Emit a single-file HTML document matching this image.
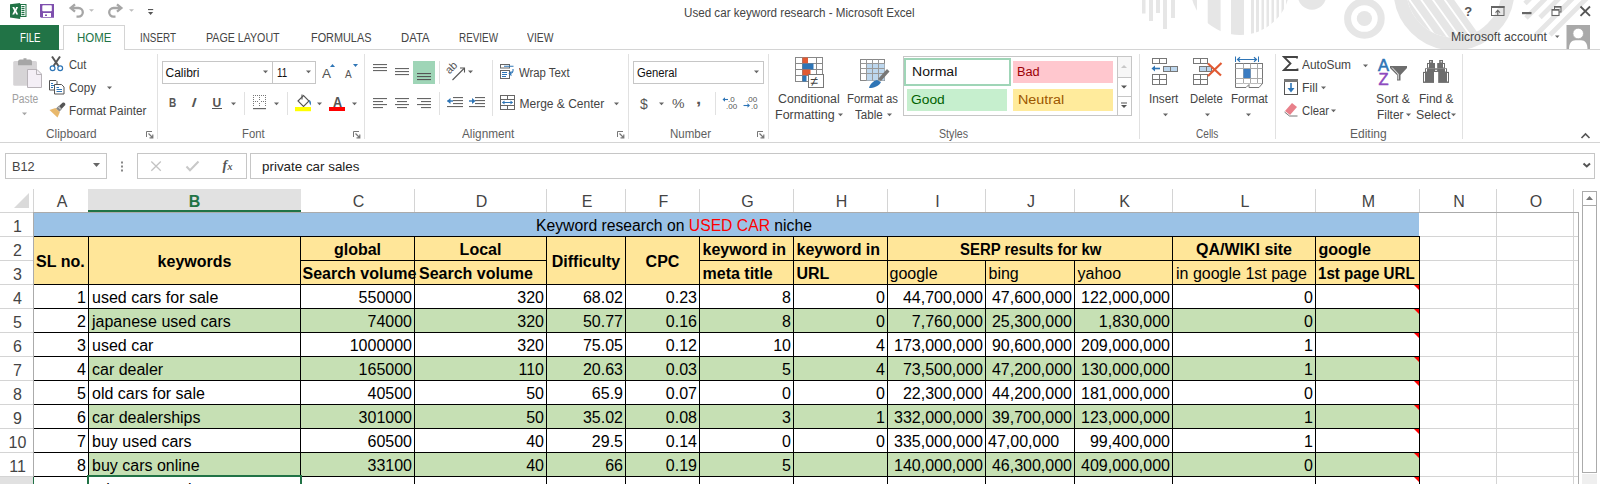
<!DOCTYPE html>
<html><head><meta charset="utf-8"><style>
html,body{margin:0;padding:0;width:1600px;height:484px;overflow:hidden;background:#fff;font-family:"Liberation Sans", sans-serif;}
.a{position:absolute;}
.t{white-space:pre;transform-origin:0 0;}
</style></head><body>
<svg class="a" style="left:0;top:0" width="1600" height="50" viewBox="0 0 1600 50"><rect x="1142" y="0" width="3.5" height="13.5" fill="#e6e6e6"/><rect x="1149" y="0" width="4" height="21" fill="#e6e6e6"/><rect x="1156" y="0" width="4" height="13" fill="#e6e6e6"/><rect x="1163" y="0" width="4" height="29" fill="#e6e6e6"/><rect x="1171" y="0" width="4" height="18" fill="#e6e6e6"/><clipPath id="cc"><circle cx="1240" cy="-15" r="50"/></clipPath><g clip-path="url(#cc)"><rect x="1190.5" y="-70" width="6.5" height="120" fill="#e6e6e6"/><rect x="1207.7" y="-70" width="12.899999999999864" height="120" fill="#e6e6e6"/><rect x="1231" y="-70" width="13" height="120" fill="#e6e6e6"/><rect x="1251" y="-70" width="3" height="120" fill="#e6e6e6"/><rect x="1256" y="-70" width="3" height="120" fill="#e6e6e6"/><rect x="1261.5" y="-70" width="2.5" height="120" fill="#e6e6e6"/><rect x="1266.5" y="-70" width="2.5" height="120" fill="#e6e6e6"/><rect x="1271.5" y="-70" width="2.5" height="120" fill="#e6e6e6"/><rect x="1276.5" y="-70" width="2.5" height="120" fill="#e6e6e6"/><rect x="1281.5" y="-70" width="2.5" height="120" fill="#e6e6e6"/><rect x="1286" y="-70" width="3" height="120" fill="#e6e6e6"/></g><circle cx="1312" cy="-4.5" r="14.2" fill="#e6e6e6"/><circle cx="1364.4" cy="18.5" r="16.8" fill="none" stroke="#e6e6e6" stroke-width="7"/><circle cx="1364.4" cy="18.5" r="7.6" fill="#e6e6e6"/><circle cx="1454" cy="-10" r="54" fill="none" stroke="#e6e6e6" stroke-width="13"/><clipPath id="c2"><circle cx="1454" cy="-10" r="47.5"/></clipPath><g clip-path="url(#c2)"><polygon points="91.1,-1908.4 1834.8,532.8 1590.7,707.1 -153.0,-1734.1" fill="#e6e6e6"/><line x1="61.5" y1="-1887.3" x2="1805.2" y2="553.9" stroke="#fff" stroke-width="1.8"/><line x1="69.3" y1="-1892.9" x2="1813.0" y2="548.3" stroke="#fff" stroke-width="1.8"/><line x1="77.1" y1="-1898.4" x2="1820.8" y2="542.8" stroke="#fff" stroke-width="1.8"/><line x1="84.9" y1="-1904.0" x2="1828.6" y2="537.2" stroke="#fff" stroke-width="1.8"/></g><polygon points="1523.3,1.8 1526.7,5.2 1676.7,-144.8 1673.3,-148.2" fill="#e6e6e6"/><polygon points="1524.3,16.3 1527.7,19.7 1677.7,-130.3 1674.3,-133.7" fill="#e6e6e6"/><polygon points="1538.3,15.8 1541.7,19.2 1691.7,-130.8 1688.3,-134.2" fill="#e6e6e6"/><polygon points="1533.3,34.3 1536.7,37.7 1686.7,-112.3 1683.3,-115.7" fill="#e6e6e6"/><polygon points="1548.3,33.3 1551.7,36.7 1701.7,-113.3 1698.3,-116.7" fill="#e6e6e6"/></svg><svg class="a" style="left:0px;top:0px" width="160" height="24" viewBox="0 0 160 24">
<polygon points="10,4.2 20.2,3 20.2,19 10,17.6" fill="#217346"/>
<rect x="20.5" y="4.5" width="5.5" height="12" fill="#fff" stroke="#217346" stroke-width="1"/>
<g fill="#217346"><rect x="21.5" y="6" width="3" height="1.2"/><rect x="21.5" y="8" width="3" height="1.2"/><rect x="21.5" y="10" width="3" height="1.2"/><rect x="21.5" y="12" width="3" height="1.2"/><rect x="21.5" y="14" width="3" height="1.2"/></g>
<path d="M12.3,7 L14.3,7 L15.2,9.2 L16.1,7 L18.1,7 L16.3,10.7 L18.2,14.6 L16.2,14.6 L15.2,12.3 L14.2,14.6 L12.2,14.6 L14.1,10.7 Z" fill="#fff"/>
<path d="M40,4 H54 V17.8 H41 L40,16.8 Z" fill="#7e4fae"/>
<rect x="42.3" y="5.2" width="9.5" height="6" rx="0.8" fill="#fff"/>
<rect x="43" y="13" width="8" height="4" fill="#fff"/>
<rect x="45" y="14.5" width="2" height="1.5" fill="#7e4fae"/>
<path d="M75,4.3 L70.6,8 L75,11.7" fill="none" stroke="#a6a6a6" stroke-width="2.3"/>
<path d="M71.5,8 H78.5 A4.3,4.3 0 0 1 78.5,16.6 H76.5" fill="none" stroke="#a6a6a6" stroke-width="2.3"/>
<polygon points="89,9.3 94,9.3 91.5,11.8" fill="#bdbdbd"/>
<path d="M117,4.3 L121.4,8 L117,11.7" fill="none" stroke="#a6a6a6" stroke-width="2.3"/>
<path d="M120.5,8 H113.5 A4.3,4.3 0 0 0 113.5,16.6 H115.5" fill="none" stroke="#a6a6a6" stroke-width="2.3"/>
<polygon points="129,9.3 134,9.3 131.5,11.8" fill="#bdbdbd"/>
<rect x="148" y="9" width="5.2" height="1.1" fill="#555"/>
<polygon points="148,12 153.2,12 150.6,15" fill="#555"/>
</svg><div class="a t" style="left:1464.30px;top:4px;font-size:13px;line-height:15px;color:#555;font-weight:bold;">?</div><svg class="a" style="left:1456px;top:0px" width="144" height="50" viewBox="0 0 144 50">
<rect x="35.5" y="6.5" width="12.5" height="9" fill="none" stroke="#666" stroke-width="1"/>
<rect x="35" y="6" width="13.5" height="2" fill="#666"/>
<path d="M41.75,15.5 V10.5 M39.5,12.6 L41.75,10.3 L44,12.6" fill="none" stroke="#666" stroke-width="1.1"/>
<rect x="66" y="12" width="9.5" height="2.2" fill="#666"/>
<rect x="98.5" y="6.5" width="6.5" height="5.5" fill="none" stroke="#666" stroke-width="1"/>
<rect x="96" y="9.5" width="7" height="6" fill="#fff" stroke="#666" stroke-width="1.1"/>
<rect x="96" y="9.2" width="7" height="1.5" fill="#666"/>
<rect x="98.5" y="6.2" width="6.5" height="1.5" fill="#666"/>
<path d="M124.5,6.5 L134,15.8 M134,6.5 L124.5,15.8" stroke="#555" stroke-width="1.8"/>
<polygon points="99,35.5 103.5,35.5 101.25,38" fill="#666"/>
<rect x="110.5" y="25" width="23.5" height="24.5" fill="#a9a9a9"/>
<path d="M113,49.5 C113,43 115.5,40.2 119.5,40.2 H125 C129,40.2 131.5,43 131.5,49.5 Z" fill="#fff"/>
<circle cx="122.2" cy="33.5" r="5.3" fill="#fff" stroke="#a9a9a9" stroke-width="0.8"/>
</svg><div class="a t" style="left:683.50px;top:6px;font-size:12px;line-height:14px;color:#444;transform:scaleX(0.9688);">Used car keyword research - Microsoft Excel</div><div class="a" style="left:0px;top:25px;width:59px;height:25px;background:#217346;"></div><div class="a t" style="left:19.50px;top:31px;font-size:12px;line-height:14px;color:#fff;transform:scaleX(0.8091);">FILE</div><div class="a" style="left:63px;top:25px;width:1px;height:25px;background:#d4d4d4;"></div><div class="a" style="left:124px;top:25px;width:1px;height:25px;background:#d4d4d4;"></div><div class="a" style="left:63px;top:25px;width:62px;height:1px;background:#d4d4d4;"></div><div class="a" style="left:59px;top:49px;width:5px;height:1px;background:#d4d4d4;"></div><div class="a" style="left:124px;top:49px;width:1476px;height:1px;background:#d4d4d4;"></div><div class="a" style="left:64px;top:26px;width:60px;height:24px;background:#fff;"></div><div class="a t" style="left:76.50px;top:31px;font-size:12px;line-height:14px;color:#217346;transform:scaleX(0.9584);">HOME</div><div class="a t" style="left:139.78px;top:31px;font-size:12px;line-height:14px;color:#444444;transform:scaleX(0.8215);">INSERT</div><div class="a t" style="left:206.30px;top:31px;font-size:12px;line-height:14px;color:#444444;transform:scaleX(0.8878);">PAGE LAYOUT</div><div class="a t" style="left:310.60px;top:31px;font-size:12px;line-height:14px;color:#444444;transform:scaleX(0.9060);">FORMULAS</div><div class="a t" style="left:400.50px;top:31px;font-size:12px;line-height:14px;color:#444444;transform:scaleX(0.9431);">DATA</div><div class="a t" style="left:458.50px;top:31px;font-size:12px;line-height:14px;color:#444444;transform:scaleX(0.8227);">REVIEW</div><div class="a t" style="left:527.00px;top:31px;font-size:12px;line-height:14px;color:#444444;transform:scaleX(0.8615);">VIEW</div><div class="a t" style="left:1450.50px;top:30px;font-size:12px;line-height:14px;color:#444444;transform:scaleX(1.0190);">Microsoft account</div><div class="a" style="left:0px;top:142px;width:1600px;height:1px;background:#d4d4d4;"></div><div class="a" style="left:5px;top:153px;width:102px;height:26px;background:#fff;border:1px solid #c6c6c6;box-sizing:border-box;"></div><div class="a t" style="left:11.52px;top:159px;font-size:13px;line-height:15px;color:#444444;transform:scaleX(0.9817);">B12</div><div class="a" style="left:137px;top:153px;width:110px;height:26px;background:#fff;border:1px solid #c6c6c6;box-sizing:border-box;"></div><div class="a" style="left:250px;top:153px;width:1345px;height:26px;background:#fff;border:1px solid #c6c6c6;box-sizing:border-box;"></div><div class="a t" style="left:262.00px;top:159px;font-size:13px;line-height:15px;color:#222;transform:scaleX(1.0300);">private car sales</div><div class="a" style="left:88px;top:189px;width:213px;height:23px;background:#e1e1e1;"></div><div class="a" style="left:88px;top:210px;width:213px;height:2px;background:#217346;"></div><div class="a" style="left:0px;top:212px;width:33px;height:1px;background:#d4d4d4;"></div><div class="a" style="left:33px;top:212px;width:1546px;height:1px;background:#ababab;"></div><div class="a" style="left:33px;top:189px;width:1px;height:23px;background:#d4d4d4;"></div><div class="a" style="left:33px;top:212px;width:1px;height:273px;background:#ababab;"></div><div class="a" style="left:414px;top:189px;width:1px;height:23px;background:#d4d4d4;"></div><div class="a" style="left:546px;top:189px;width:1px;height:23px;background:#d4d4d4;"></div><div class="a" style="left:625px;top:189px;width:1px;height:23px;background:#d4d4d4;"></div><div class="a" style="left:699px;top:189px;width:1px;height:23px;background:#d4d4d4;"></div><div class="a" style="left:793px;top:189px;width:1px;height:23px;background:#d4d4d4;"></div><div class="a" style="left:887px;top:189px;width:1px;height:23px;background:#d4d4d4;"></div><div class="a" style="left:985px;top:189px;width:1px;height:23px;background:#d4d4d4;"></div><div class="a" style="left:1074px;top:189px;width:1px;height:23px;background:#d4d4d4;"></div><div class="a" style="left:1172px;top:189px;width:1px;height:23px;background:#d4d4d4;"></div><div class="a" style="left:1315px;top:189px;width:1px;height:23px;background:#d4d4d4;"></div><div class="a" style="left:1419px;top:189px;width:1px;height:23px;background:#d4d4d4;"></div><div class="a" style="left:1496px;top:189px;width:1px;height:23px;background:#d4d4d4;"></div><div class="a" style="left:1573px;top:189px;width:1px;height:23px;background:#d4d4d4;"></div><div class="a" style="left:1578px;top:212px;width:1px;height:273px;background:#ababab;"></div><div class="a t" style="left:56.66px;top:192.6px;font-size:16px;line-height:17px;color:#444444;">A</div><div class="a t" style="left:188.72px;top:192.6px;font-size:16px;line-height:17px;color:#217346;font-weight:bold;">B</div><div class="a t" style="left:352.72px;top:192.6px;font-size:16px;line-height:17px;color:#444444;">C</div><div class="a t" style="left:475.72px;top:192.6px;font-size:16px;line-height:17px;color:#444444;">D</div><div class="a t" style="left:581.66px;top:192.6px;font-size:16px;line-height:17px;color:#444444;">E</div><div class="a t" style="left:658.61px;top:192.6px;font-size:16px;line-height:17px;color:#444444;">F</div><div class="a t" style="left:741.28px;top:192.6px;font-size:16px;line-height:17px;color:#444444;">G</div><div class="a t" style="left:835.72px;top:192.6px;font-size:16px;line-height:17px;color:#444444;">H</div><div class="a t" style="left:935.28px;top:192.6px;font-size:16px;line-height:17px;color:#444444;">I</div><div class="a t" style="left:1027.00px;top:192.6px;font-size:16px;line-height:17px;color:#444444;">J</div><div class="a t" style="left:1119.16px;top:192.6px;font-size:16px;line-height:17px;color:#444444;">K</div><div class="a t" style="left:1240.55px;top:192.6px;font-size:16px;line-height:17px;color:#444444;">L</div><div class="a t" style="left:1361.84px;top:192.6px;font-size:16px;line-height:17px;color:#444444;">M</div><div class="a t" style="left:1453.22px;top:192.6px;font-size:16px;line-height:17px;color:#444444;">N</div><div class="a t" style="left:1529.78px;top:192.6px;font-size:16px;line-height:17px;color:#444444;">O</div><svg class="a" style="left:0px;top:189px" width="33" height="23" viewBox="0 0 33 23"><polygon points="29,4 29,19 14,19" fill="#dadada"/></svg><div class="a" style="left:0px;top:477px;width:33px;height:7px;background:#e1e1e1;"></div><div class="a" style="left:0px;top:236px;width:33px;height:1px;background:#d4d4d4;"></div><div class="a t" style="left:13.05px;top:217.6px;font-size:16px;line-height:17px;color:#444444;">1</div><div class="a" style="left:0px;top:260px;width:33px;height:1px;background:#d4d4d4;"></div><div class="a t" style="left:13.05px;top:241.6px;font-size:16px;line-height:17px;color:#444444;">2</div><div class="a" style="left:0px;top:284px;width:33px;height:1px;background:#d4d4d4;"></div><div class="a t" style="left:13.05px;top:265.6px;font-size:16px;line-height:17px;color:#444444;">3</div><div class="a" style="left:0px;top:308px;width:33px;height:1px;background:#d4d4d4;"></div><div class="a t" style="left:13.05px;top:289.6px;font-size:16px;line-height:17px;color:#444444;">4</div><div class="a" style="left:0px;top:332px;width:33px;height:1px;background:#d4d4d4;"></div><div class="a t" style="left:13.05px;top:313.6px;font-size:16px;line-height:17px;color:#444444;">5</div><div class="a" style="left:0px;top:356px;width:33px;height:1px;background:#d4d4d4;"></div><div class="a t" style="left:13.05px;top:337.6px;font-size:16px;line-height:17px;color:#444444;">6</div><div class="a" style="left:0px;top:380px;width:33px;height:1px;background:#d4d4d4;"></div><div class="a t" style="left:13.05px;top:361.6px;font-size:16px;line-height:17px;color:#444444;">7</div><div class="a" style="left:0px;top:404px;width:33px;height:1px;background:#d4d4d4;"></div><div class="a t" style="left:13.05px;top:385.6px;font-size:16px;line-height:17px;color:#444444;">8</div><div class="a" style="left:0px;top:428px;width:33px;height:1px;background:#d4d4d4;"></div><div class="a t" style="left:13.05px;top:409.6px;font-size:16px;line-height:17px;color:#444444;">9</div><div class="a" style="left:0px;top:452px;width:33px;height:1px;background:#d4d4d4;"></div><div class="a t" style="left:8.60px;top:433.6px;font-size:16px;line-height:17px;color:#444444;">10</div><div class="a" style="left:0px;top:476px;width:33px;height:1px;background:#d4d4d4;"></div><div class="a t" style="left:9.20px;top:457.6px;font-size:16px;line-height:17px;color:#444444;">11</div><div class="a" style="left:0px;top:500px;width:33px;height:1px;background:#d4d4d4;"></div><div class="a t" style="left:8.60px;top:481.6px;font-size:16px;line-height:17px;color:#444444;">12</div><div class="a" style="left:33px;top:477px;width:1px;height:8px;background:#217346;"></div><div class="a" style="left:34px;top:213px;width:1385px;height:23px;background:#9bc2e6;"></div><div class="a" style="left:34px;top:237px;width:1385px;height:47px;background:#ffe699;"></div><div class="a" style="left:89px;top:309px;width:1330px;height:23px;background:#c6e0b4;"></div><div class="a" style="left:89px;top:357px;width:1330px;height:23px;background:#c6e0b4;"></div><div class="a" style="left:89px;top:405px;width:1330px;height:23px;background:#c6e0b4;"></div><div class="a" style="left:89px;top:453px;width:1330px;height:23px;background:#c6e0b4;"></div><div class="a" style="left:1420px;top:236px;width:158px;height:1px;background:#d4d4d4;"></div><div class="a" style="left:1420px;top:260px;width:158px;height:1px;background:#d4d4d4;"></div><div class="a" style="left:1420px;top:284px;width:158px;height:1px;background:#d4d4d4;"></div><div class="a" style="left:1420px;top:308px;width:158px;height:1px;background:#d4d4d4;"></div><div class="a" style="left:1420px;top:332px;width:158px;height:1px;background:#d4d4d4;"></div><div class="a" style="left:1420px;top:356px;width:158px;height:1px;background:#d4d4d4;"></div><div class="a" style="left:1420px;top:380px;width:158px;height:1px;background:#d4d4d4;"></div><div class="a" style="left:1420px;top:404px;width:158px;height:1px;background:#d4d4d4;"></div><div class="a" style="left:1420px;top:428px;width:158px;height:1px;background:#d4d4d4;"></div><div class="a" style="left:1420px;top:452px;width:158px;height:1px;background:#d4d4d4;"></div><div class="a" style="left:1420px;top:476px;width:158px;height:1px;background:#d4d4d4;"></div><div class="a" style="left:1420px;top:500px;width:158px;height:1px;background:#d4d4d4;"></div><div class="a" style="left:1496px;top:213px;width:1px;height:272px;background:#d4d4d4;"></div><div class="a" style="left:1573px;top:213px;width:1px;height:272px;background:#d4d4d4;"></div><div class="a" style="left:88px;top:236px;width:1px;height:249px;background:#000;"></div><div class="a" style="left:300px;top:236px;width:1px;height:249px;background:#000;"></div><div class="a" style="left:414px;top:236px;width:1px;height:249px;background:#000;"></div><div class="a" style="left:546px;top:236px;width:1px;height:249px;background:#000;"></div><div class="a" style="left:625px;top:236px;width:1px;height:249px;background:#000;"></div><div class="a" style="left:699px;top:236px;width:1px;height:249px;background:#000;"></div><div class="a" style="left:793px;top:236px;width:1px;height:249px;background:#000;"></div><div class="a" style="left:887px;top:236px;width:1px;height:249px;background:#000;"></div><div class="a" style="left:985px;top:236px;width:1px;height:249px;background:#000;"></div><div class="a" style="left:1074px;top:236px;width:1px;height:249px;background:#000;"></div><div class="a" style="left:1172px;top:236px;width:1px;height:249px;background:#000;"></div><div class="a" style="left:1315px;top:236px;width:1px;height:249px;background:#000;"></div><div class="a" style="left:1419px;top:236px;width:1px;height:249px;background:#000;"></div><div class="a" style="left:34px;top:236px;width:1386px;height:1px;background:#000;"></div><div class="a" style="left:34px;top:284px;width:1386px;height:1px;background:#000;"></div><div class="a" style="left:34px;top:308px;width:1386px;height:1px;background:#000;"></div><div class="a" style="left:34px;top:332px;width:1386px;height:1px;background:#000;"></div><div class="a" style="left:34px;top:356px;width:1386px;height:1px;background:#000;"></div><div class="a" style="left:34px;top:380px;width:1386px;height:1px;background:#000;"></div><div class="a" style="left:34px;top:404px;width:1386px;height:1px;background:#000;"></div><div class="a" style="left:34px;top:428px;width:1386px;height:1px;background:#000;"></div><div class="a" style="left:34px;top:452px;width:1386px;height:1px;background:#000;"></div><div class="a" style="left:34px;top:476px;width:1386px;height:1px;background:#000;"></div><div class="a" style="left:34px;top:500px;width:1386px;height:1px;background:#000;"></div><div class="a" style="left:300px;top:260px;width:115px;height:1px;background:#000;"></div><div class="a" style="left:414px;top:260px;width:133px;height:1px;background:#000;"></div><div class="a" style="left:699px;top:260px;width:95px;height:1px;background:#000;"></div><div class="a" style="left:793px;top:260px;width:95px;height:1px;background:#000;"></div><div class="a" style="left:887px;top:260px;width:286px;height:1px;background:#000;"></div><div class="a" style="left:1172px;top:260px;width:144px;height:1px;background:#000;"></div><div class="a" style="left:1315px;top:260px;width:105px;height:1px;background:#000;"></div><div class="a" style="left:985px;top:237px;width:1px;height:23px;background:#ffe699;"></div><div class="a" style="left:1074px;top:237px;width:1px;height:23px;background:#ffe699;"></div><svg class="a" style="left:1414px;top:285px" width="5" height="5" viewBox="0 0 5 5"><polygon points="0,0 5,0 5,5" fill="#f00"/></svg><svg class="a" style="left:1414px;top:309px" width="5" height="5" viewBox="0 0 5 5"><polygon points="0,0 5,0 5,5" fill="#f00"/></svg><svg class="a" style="left:1414px;top:333px" width="5" height="5" viewBox="0 0 5 5"><polygon points="0,0 5,0 5,5" fill="#f00"/></svg><svg class="a" style="left:1414px;top:357px" width="5" height="5" viewBox="0 0 5 5"><polygon points="0,0 5,0 5,5" fill="#f00"/></svg><svg class="a" style="left:1414px;top:381px" width="5" height="5" viewBox="0 0 5 5"><polygon points="0,0 5,0 5,5" fill="#f00"/></svg><svg class="a" style="left:1414px;top:405px" width="5" height="5" viewBox="0 0 5 5"><polygon points="0,0 5,0 5,5" fill="#f00"/></svg><svg class="a" style="left:1414px;top:429px" width="5" height="5" viewBox="0 0 5 5"><polygon points="0,0 5,0 5,5" fill="#f00"/></svg><svg class="a" style="left:1414px;top:453px" width="5" height="5" viewBox="0 0 5 5"><polygon points="0,0 5,0 5,5" fill="#f00"/></svg><svg class="a" style="left:1414px;top:477px" width="5" height="5" viewBox="0 0 5 5"><polygon points="0,0 5,0 5,5" fill="#f00"/></svg><div class="a t" style="left:536.02px;top:217px;font-size:16px;line-height:17px;color:#000;transform:scaleX(0.9818);">Keyword research on <span style="color:#f00">USED CAR</span> niche</div><div class="a t" style="left:959.50px;top:241px;font-size:16px;line-height:17px;color:#000;font-weight:bold;transform:scaleX(0.9318);">SERP results for kw</div><div class="a t" style="left:36.06px;top:253px;font-size:16px;line-height:17px;color:#000;font-weight:bold;">SL no.</div><div class="a t" style="left:157.59px;top:253px;font-size:16px;line-height:17px;color:#000;font-weight:bold;">keywords</div><div class="a t" style="left:333.95px;top:241px;font-size:16px;line-height:17px;color:#000;font-weight:bold;">global</div><div class="a t" style="left:302.50px;top:265px;font-size:16px;line-height:17px;color:#000;font-weight:bold;">Search volume</div><div class="a t" style="left:459.61px;top:241px;font-size:16px;line-height:17px;color:#000;font-weight:bold;">Local</div><div class="a t" style="left:419.00px;top:265px;font-size:16px;line-height:17px;color:#000;font-weight:bold;">Search volume</div><div class="a t" style="left:551.78px;top:253px;font-size:16px;line-height:17px;color:#000;font-weight:bold;">Difficulty</div><div class="a t" style="left:645.61px;top:253px;font-size:16px;line-height:17px;color:#000;font-weight:bold;">CPC</div><div class="a t" style="left:702.50px;top:241px;font-size:16px;line-height:17px;color:#000;font-weight:bold;">keyword in</div><div class="a t" style="left:702.50px;top:265px;font-size:16px;line-height:17px;color:#000;font-weight:bold;">meta title</div><div class="a t" style="left:796.50px;top:241px;font-size:16px;line-height:17px;color:#000;font-weight:bold;">keyword in</div><div class="a t" style="left:796.50px;top:265px;font-size:16px;line-height:17px;color:#000;font-weight:bold;">URL</div><div class="a t" style="left:1196.00px;top:241px;font-size:16px;line-height:17px;color:#000;font-weight:bold;">QA/WIKI site</div><div class="a t" style="left:1318.50px;top:241px;font-size:16px;line-height:17px;color:#000;font-weight:bold;">google</div><div class="a t" style="left:1318.45px;top:265px;font-size:16px;line-height:17px;color:#000;font-weight:bold;transform:scaleX(0.9461);">1st page URL</div><div class="a t" style="left:889.50px;top:265px;font-size:16px;line-height:17px;color:#000;">google</div><div class="a t" style="left:988.50px;top:265px;font-size:16px;line-height:17px;color:#000;">bing</div><div class="a t" style="left:1077.50px;top:265px;font-size:16px;line-height:17px;color:#000;">yahoo</div><div class="a t" style="left:1176.00px;top:265px;font-size:16px;line-height:17px;color:#000;">in google 1st page</div><div class="a t" style="left:77.10px;top:289px;font-size:16px;line-height:17px;color:#000;">1</div><div class="a t" style="left:92.00px;top:289px;font-size:16px;line-height:17px;color:#000;">used cars for sale</div><div class="a t" style="left:358.61px;top:289px;font-size:16px;line-height:17px;color:#000;">550000</div><div class="a t" style="left:517.30px;top:289px;font-size:16px;line-height:17px;color:#000;">320</div><div class="a t" style="left:582.96px;top:289px;font-size:16px;line-height:17px;color:#000;">68.02</div><div class="a t" style="left:665.86px;top:289px;font-size:16px;line-height:17px;color:#000;">0.23</div><div class="a t" style="left:782.10px;top:289px;font-size:16px;line-height:17px;color:#000;">8</div><div class="a t" style="left:876.10px;top:289px;font-size:16px;line-height:17px;color:#000;">0</div><div class="a t" style="left:902.92px;top:289px;font-size:16px;line-height:17px;color:#000;">44,700,000</div><div class="a t" style="left:991.92px;top:289px;font-size:16px;line-height:17px;color:#000;">47,600,000</div><div class="a t" style="left:1081.02px;top:289px;font-size:16px;line-height:17px;color:#000;">122,000,000</div><div class="a t" style="left:1304.10px;top:289px;font-size:16px;line-height:17px;color:#000;">0</div><div class="a t" style="left:77.10px;top:313px;font-size:16px;line-height:17px;color:#000;">2</div><div class="a t" style="left:92.00px;top:313px;font-size:16px;line-height:17px;color:#000;">japanese used cars</div><div class="a t" style="left:367.51px;top:313px;font-size:16px;line-height:17px;color:#000;">74000</div><div class="a t" style="left:517.30px;top:313px;font-size:16px;line-height:17px;color:#000;">320</div><div class="a t" style="left:582.96px;top:313px;font-size:16px;line-height:17px;color:#000;">50.77</div><div class="a t" style="left:665.86px;top:313px;font-size:16px;line-height:17px;color:#000;">0.16</div><div class="a t" style="left:782.10px;top:313px;font-size:16px;line-height:17px;color:#000;">8</div><div class="a t" style="left:876.10px;top:313px;font-size:16px;line-height:17px;color:#000;">0</div><div class="a t" style="left:911.82px;top:313px;font-size:16px;line-height:17px;color:#000;">7,760,000</div><div class="a t" style="left:991.92px;top:313px;font-size:16px;line-height:17px;color:#000;">25,300,000</div><div class="a t" style="left:1098.82px;top:313px;font-size:16px;line-height:17px;color:#000;">1,830,000</div><div class="a t" style="left:1304.10px;top:313px;font-size:16px;line-height:17px;color:#000;">0</div><div class="a t" style="left:77.10px;top:337px;font-size:16px;line-height:17px;color:#000;">3</div><div class="a t" style="left:92.00px;top:337px;font-size:16px;line-height:17px;color:#000;">used car</div><div class="a t" style="left:349.71px;top:337px;font-size:16px;line-height:17px;color:#000;">1000000</div><div class="a t" style="left:517.30px;top:337px;font-size:16px;line-height:17px;color:#000;">320</div><div class="a t" style="left:582.96px;top:337px;font-size:16px;line-height:17px;color:#000;">75.05</div><div class="a t" style="left:665.86px;top:337px;font-size:16px;line-height:17px;color:#000;">0.12</div><div class="a t" style="left:773.20px;top:337px;font-size:16px;line-height:17px;color:#000;">10</div><div class="a t" style="left:876.10px;top:337px;font-size:16px;line-height:17px;color:#000;">4</div><div class="a t" style="left:894.02px;top:337px;font-size:16px;line-height:17px;color:#000;">173,000,000</div><div class="a t" style="left:991.92px;top:337px;font-size:16px;line-height:17px;color:#000;">90,600,000</div><div class="a t" style="left:1081.02px;top:337px;font-size:16px;line-height:17px;color:#000;">209,000,000</div><div class="a t" style="left:1304.10px;top:337px;font-size:16px;line-height:17px;color:#000;">1</div><div class="a t" style="left:77.10px;top:361px;font-size:16px;line-height:17px;color:#000;">4</div><div class="a t" style="left:92.00px;top:361px;font-size:16px;line-height:17px;color:#000;">car dealer</div><div class="a t" style="left:358.61px;top:361px;font-size:16px;line-height:17px;color:#000;">165000</div><div class="a t" style="left:518.49px;top:361px;font-size:16px;line-height:17px;color:#000;">110</div><div class="a t" style="left:582.96px;top:361px;font-size:16px;line-height:17px;color:#000;">20.63</div><div class="a t" style="left:665.86px;top:361px;font-size:16px;line-height:17px;color:#000;">0.03</div><div class="a t" style="left:782.10px;top:361px;font-size:16px;line-height:17px;color:#000;">5</div><div class="a t" style="left:876.10px;top:361px;font-size:16px;line-height:17px;color:#000;">4</div><div class="a t" style="left:902.92px;top:361px;font-size:16px;line-height:17px;color:#000;">73,500,000</div><div class="a t" style="left:991.92px;top:361px;font-size:16px;line-height:17px;color:#000;">47,200,000</div><div class="a t" style="left:1081.02px;top:361px;font-size:16px;line-height:17px;color:#000;">130,000,000</div><div class="a t" style="left:1304.10px;top:361px;font-size:16px;line-height:17px;color:#000;">1</div><div class="a t" style="left:77.10px;top:385px;font-size:16px;line-height:17px;color:#000;">5</div><div class="a t" style="left:92.00px;top:385px;font-size:16px;line-height:17px;color:#000;">old cars for sale</div><div class="a t" style="left:367.51px;top:385px;font-size:16px;line-height:17px;color:#000;">40500</div><div class="a t" style="left:526.20px;top:385px;font-size:16px;line-height:17px;color:#000;">50</div><div class="a t" style="left:591.86px;top:385px;font-size:16px;line-height:17px;color:#000;">65.9</div><div class="a t" style="left:665.86px;top:385px;font-size:16px;line-height:17px;color:#000;">0.07</div><div class="a t" style="left:782.10px;top:385px;font-size:16px;line-height:17px;color:#000;">0</div><div class="a t" style="left:876.10px;top:385px;font-size:16px;line-height:17px;color:#000;">0</div><div class="a t" style="left:902.92px;top:385px;font-size:16px;line-height:17px;color:#000;">22,300,000</div><div class="a t" style="left:991.92px;top:385px;font-size:16px;line-height:17px;color:#000;">44,200,000</div><div class="a t" style="left:1081.02px;top:385px;font-size:16px;line-height:17px;color:#000;">181,000,000</div><div class="a t" style="left:1304.10px;top:385px;font-size:16px;line-height:17px;color:#000;">0</div><div class="a t" style="left:77.10px;top:409px;font-size:16px;line-height:17px;color:#000;">6</div><div class="a t" style="left:92.00px;top:409px;font-size:16px;line-height:17px;color:#000;">car dealerships</div><div class="a t" style="left:358.61px;top:409px;font-size:16px;line-height:17px;color:#000;">301000</div><div class="a t" style="left:526.20px;top:409px;font-size:16px;line-height:17px;color:#000;">50</div><div class="a t" style="left:582.96px;top:409px;font-size:16px;line-height:17px;color:#000;">35.02</div><div class="a t" style="left:665.86px;top:409px;font-size:16px;line-height:17px;color:#000;">0.08</div><div class="a t" style="left:782.10px;top:409px;font-size:16px;line-height:17px;color:#000;">3</div><div class="a t" style="left:876.10px;top:409px;font-size:16px;line-height:17px;color:#000;">1</div><div class="a t" style="left:894.02px;top:409px;font-size:16px;line-height:17px;color:#000;">332,000,000</div><div class="a t" style="left:991.92px;top:409px;font-size:16px;line-height:17px;color:#000;">39,700,000</div><div class="a t" style="left:1081.02px;top:409px;font-size:16px;line-height:17px;color:#000;">123,000,000</div><div class="a t" style="left:1304.10px;top:409px;font-size:16px;line-height:17px;color:#000;">1</div><div class="a t" style="left:77.10px;top:433px;font-size:16px;line-height:17px;color:#000;">7</div><div class="a t" style="left:92.00px;top:433px;font-size:16px;line-height:17px;color:#000;">buy used cars</div><div class="a t" style="left:367.51px;top:433px;font-size:16px;line-height:17px;color:#000;">60500</div><div class="a t" style="left:526.20px;top:433px;font-size:16px;line-height:17px;color:#000;">40</div><div class="a t" style="left:591.86px;top:433px;font-size:16px;line-height:17px;color:#000;">29.5</div><div class="a t" style="left:665.86px;top:433px;font-size:16px;line-height:17px;color:#000;">0.14</div><div class="a t" style="left:782.10px;top:433px;font-size:16px;line-height:17px;color:#000;">0</div><div class="a t" style="left:876.10px;top:433px;font-size:16px;line-height:17px;color:#000;">0</div><div class="a t" style="left:894.02px;top:433px;font-size:16px;line-height:17px;color:#000;">335,000,000</div><div class="a t" style="left:988.00px;top:433px;font-size:16px;line-height:17px;color:#000;">47,00,000</div><div class="a t" style="left:1089.92px;top:433px;font-size:16px;line-height:17px;color:#000;">99,400,000</div><div class="a t" style="left:1304.10px;top:433px;font-size:16px;line-height:17px;color:#000;">1</div><div class="a t" style="left:77.10px;top:457px;font-size:16px;line-height:17px;color:#000;">8</div><div class="a t" style="left:92.00px;top:457px;font-size:16px;line-height:17px;color:#000;">buy cars online</div><div class="a t" style="left:367.51px;top:457px;font-size:16px;line-height:17px;color:#000;">33100</div><div class="a t" style="left:526.20px;top:457px;font-size:16px;line-height:17px;color:#000;">40</div><div class="a t" style="left:605.20px;top:457px;font-size:16px;line-height:17px;color:#000;">66</div><div class="a t" style="left:665.86px;top:457px;font-size:16px;line-height:17px;color:#000;">0.19</div><div class="a t" style="left:782.10px;top:457px;font-size:16px;line-height:17px;color:#000;">5</div><div class="a t" style="left:894.02px;top:457px;font-size:16px;line-height:17px;color:#000;">140,000,000</div><div class="a t" style="left:991.92px;top:457px;font-size:16px;line-height:17px;color:#000;">46,300,000</div><div class="a t" style="left:1081.02px;top:457px;font-size:16px;line-height:17px;color:#000;">409,000,000</div><div class="a t" style="left:1304.10px;top:457px;font-size:16px;line-height:17px;color:#000;">0</div><div class="a t" style="left:92.00px;top:481px;font-size:16px;line-height:17px;color:#000;">private car sales</div><div class="a" style="left:87px;top:475px;width:215px;height:2px;background:#217346;"></div><div class="a" style="left:87px;top:475px;width:2px;height:10px;background:#217346;"></div><div class="a" style="left:300px;top:475px;width:2px;height:10px;background:#217346;"></div><div class="a" style="left:1582px;top:474px;width:15px;height:10px;background:#efefef;"></div><div class="a" style="left:1582px;top:191px;width:15px;height:15px;background:#fff;border:1px solid #ababab;box-sizing:border-box;"></div><div class="a" style="left:1582px;top:205px;width:15px;height:268px;background:#fff;border:1px solid #ababab;box-sizing:border-box;"></div><svg class="a" style="left:1582px;top:191px" width="15" height="14" viewBox="0 0 15 14"><polygon points="4,9 11,9 7.5,5" fill="#777"/></svg><svg class="a" style="left:85px;top:150px" width="170" height="32" viewBox="0 0 170 32">
<polygon points="8,13 15,13 11.5,17" fill="#666"/>
<g fill="#888"><rect x="36" y="11.5" width="2" height="2"/><rect x="36" y="15.5" width="2" height="2"/><rect x="36" y="19.5" width="2" height="2"/></g>
<path d="M66.3,11.5 L75.8,20.8 M75.8,11.5 L66.3,20.8" stroke="#c3c3c3" stroke-width="1.3"/>
<path d="M101.5,16.5 L105,20.3 L113.5,11.5" fill="none" stroke="#c8c8c8" stroke-width="2"/>
<text x="137.5" y="19.5" font-size="14" font-weight="bold" font-style="italic" font-family="Liberation Serif" fill="#555">f</text>
<text x="142.5" y="19.5" font-size="10" font-weight="bold" font-style="italic" font-family="Liberation Serif" fill="#555">x</text>
</svg><svg class="a" style="left:1578px;top:158px" width="16" height="14" viewBox="0 0 16 14"><path d="M5.5,5.5 L8.75,8.5 L12,5.5" fill="none" stroke="#555" stroke-width="2"/></svg><div class="a" style="left:157px;top:54px;width:1px;height:85px;background:#e1e1e1;"></div><div class="a" style="left:364px;top:54px;width:1px;height:85px;background:#e1e1e1;"></div><div class="a" style="left:628px;top:54px;width:1px;height:85px;background:#e1e1e1;"></div><div class="a" style="left:768px;top:54px;width:1px;height:85px;background:#e1e1e1;"></div><div class="a" style="left:1139px;top:54px;width:1px;height:85px;background:#e1e1e1;"></div><div class="a" style="left:1275px;top:54px;width:1px;height:85px;background:#e1e1e1;"></div><div class="a" style="left:1462px;top:54px;width:1px;height:85px;background:#e1e1e1;"></div><div class="a t" style="left:45.60px;top:127px;font-size:12px;line-height:14px;color:#5e5e5e;transform:scaleX(0.9864);">Clipboard</div><div class="a t" style="left:241.50px;top:127px;font-size:12px;line-height:14px;color:#5e5e5e;transform:scaleX(0.9401);">Font</div><div class="a t" style="left:462.00px;top:127px;font-size:12px;line-height:14px;color:#5e5e5e;transform:scaleX(0.9810);">Alignment</div><div class="a t" style="left:670.00px;top:127px;font-size:12px;line-height:14px;color:#5e5e5e;transform:scaleX(0.9606);">Number</div><div class="a t" style="left:939.00px;top:127px;font-size:12px;line-height:14px;color:#5e5e5e;transform:scaleX(0.8875);">Styles</div><div class="a t" style="left:1195.60px;top:127px;font-size:12px;line-height:14px;color:#5e5e5e;transform:scaleX(0.8398);">Cells</div><div class="a t" style="left:1350.00px;top:127px;font-size:12px;line-height:14px;color:#5e5e5e;">Editing</div><svg class="a" style="left:146px;top:131px" width="8" height="8" viewBox="0 0 8 8"><path d="M0.5,6 V0.5 H6" fill="none" stroke="#777" stroke-width="1"/><path d="M2.5,2.5 L6.5,6.5 M3.5,6.8 H6.8 V3.5" fill="none" stroke="#777" stroke-width="1.2"/></svg><svg class="a" style="left:353px;top:131px" width="8" height="8" viewBox="0 0 8 8"><path d="M0.5,6 V0.5 H6" fill="none" stroke="#777" stroke-width="1"/><path d="M2.5,2.5 L6.5,6.5 M3.5,6.8 H6.8 V3.5" fill="none" stroke="#777" stroke-width="1.2"/></svg><svg class="a" style="left:617px;top:131px" width="8" height="8" viewBox="0 0 8 8"><path d="M0.5,6 V0.5 H6" fill="none" stroke="#777" stroke-width="1"/><path d="M2.5,2.5 L6.5,6.5 M3.5,6.8 H6.8 V3.5" fill="none" stroke="#777" stroke-width="1.2"/></svg><svg class="a" style="left:757px;top:131px" width="8" height="8" viewBox="0 0 8 8"><path d="M0.5,6 V0.5 H6" fill="none" stroke="#777" stroke-width="1"/><path d="M2.5,2.5 L6.5,6.5 M3.5,6.8 H6.8 V3.5" fill="none" stroke="#777" stroke-width="1.2"/></svg><svg class="a" style="left:1580px;top:132px" width="12" height="8" viewBox="0 0 12 8"><path d="M1.5,6 L5.5,2 L9.5,6" fill="none" stroke="#555" stroke-width="1.6"/></svg><svg class="a" style="left:8px;top:52px" width="40" height="40" viewBox="0 0 40 40">
<rect x="5.2" y="9.1" width="23.8" height="24.6" rx="1.5" fill="#d6d4d6"/>
<path d="M10,13.3 H24 V9.5 C24,8.5 23,7.5 22,7.5 H18.5 V6.3 H15.5 V7.5 H12 C11,7.5 10,8.5 10,9.5 Z" fill="#a6a6a6"/>
<path d="M19.5,17.5 H29 L33.5,22 V35.5 H19.5 Z" fill="#f4eff6" stroke="#b8b3b8" stroke-width="1"/>
<path d="M28.5,17.5 V22.5 H33.5" fill="none" stroke="#b8b3b8" stroke-width="1"/>
</svg><div class="a t" style="left:12.00px;top:92px;font-size:12px;line-height:14px;color:#a0a0a0;transform:scaleX(0.8577);">Paste</div><svg class="a" style="left:22px;top:112px" width="6" height="4" viewBox="0 0 6 4"><polygon points="0,0.5 5,0.5 2.5,3.2" fill="#a6a6a6"/></svg><svg class="a" style="left:48px;top:54px" width="20" height="66" viewBox="0 0 20 66">
<path d="M4,2.5 L10.5,12 M12,2.5 L5.5,12" stroke="#555" stroke-width="2"/>
<circle cx="4.6" cy="14.3" r="2.4" fill="#fff" stroke="#2e75b6" stroke-width="1.2"/>
<circle cx="12.2" cy="14.3" r="2.4" fill="#fff" stroke="#2e75b6" stroke-width="1.2"/>
<path d="M1.5,26.5 H8 L9,27.5 V36 H1.5 Z" fill="#fff" stroke="#555" stroke-width="1"/>
<g stroke="#2e75b6" stroke-width="1"><path d="M3,29.5 H5 M3,31.5 H6 M3,33.5 H5"/></g>
<path d="M6.5,30.5 H13.5 L16,33 V40 H6.5 Z" fill="#fff" stroke="#555" stroke-width="1"/>
<g stroke="#2e75b6" stroke-width="1"><path d="M8.5,33.5 H11 M8.5,35.5 H14 M8.5,37.5 H14"/></g>
<path d="M11,52 L14.5,48.8 C15.5,48 16.5,48.5 17,49.2 C17.5,50 17.5,51 16.8,51.6 L13.5,55 Z" fill="#555"/>
<path d="M8,54.5 L10.8,51.8 L14,55 L11.3,57.8 Z" fill="#888"/>
<path d="M10.5,53 L12.8,55.4" stroke="#fff" stroke-width="0.8"/>
<path d="M1.5,56 L7.5,54 L11.8,58.3 L9.5,63.5 Z" fill="#e8b86c"/>
</svg><div class="a t" style="left:68.60px;top:58px;font-size:12px;line-height:14px;color:#444444;transform:scaleX(0.9307);">Cut</div><div class="a t" style="left:68.60px;top:81px;font-size:12px;line-height:14px;color:#444444;transform:scaleX(0.9638);">Copy</div><svg class="a" style="left:106.5px;top:86px" width="6" height="4" viewBox="0 0 6 4"><polygon points="0,0.5 5,0.5 2.5,3.2" fill="#666666"/></svg><div class="a t" style="left:68.60px;top:104px;font-size:12px;line-height:14px;color:#444444;transform:scaleX(0.9753);">Format Painter</div><div class="a" style="left:162px;top:61px;width:111px;height:23px;background:#fff;border:1px solid #c6c6c6;box-sizing:border-box;"></div><div class="a" style="left:272px;top:61px;width:44px;height:23px;background:#fff;border:1px solid #c6c6c6;box-sizing:border-box;"></div><div class="a t" style="left:165.50px;top:66px;font-size:12px;line-height:14px;color:#111;">Calibri</div><svg class="a" style="left:262.5px;top:70px" width="6" height="4" viewBox="0 0 6 4"><polygon points="0,0.5 5,0.5 2.5,3.2" fill="#666666"/></svg><div class="a t" style="left:276.60px;top:66px;font-size:12px;line-height:14px;color:#111;transform:scaleX(0.8136);">11</div><svg class="a" style="left:305.5px;top:70px" width="6" height="4" viewBox="0 0 6 4"><polygon points="0,0.5 5,0.5 2.5,3.2" fill="#666666"/></svg><div class="a t" style="left:322.00px;top:66.5px;font-size:12px;line-height:14px;color:#555;transform:scaleX(1.1250);">A</div><svg class="a" style="left:329px;top:63px" width="8" height="5" viewBox="0 0 8 5"><polygon points="1,4 6,4 3.5,1" fill="#2e75b6"/></svg><div class="a t" style="left:345.00px;top:68.5px;font-size:10px;line-height:11px;color:#555;">A</div><svg class="a" style="left:352px;top:63px" width="8" height="5" viewBox="0 0 8 5"><polygon points="1,1 6,1 3.5,4" fill="#2e75b6"/></svg><div class="a t" style="left:168.70px;top:96px;font-size:12px;line-height:14px;color:#555;font-weight:bold;transform:scaleX(0.8333);">B</div><div class="a t" style="left:191.00px;top:96px;font-size:12px;line-height:14px;color:#555;font-style:italic;transform:scaleX(1.7500);">I</div><div class="a t" style="left:212.50px;top:96px;font-size:12px;line-height:14px;color:#555;font-weight:bold;">U</div><div class="a" style="left:212px;top:108px;width:10px;height:1px;background:#555;"></div><svg class="a" style="left:231px;top:102px" width="6" height="4" viewBox="0 0 6 4"><polygon points="0,0.5 5,0.5 2.5,3.2" fill="#666666"/></svg><div class="a" style="left:244px;top:92px;width:1px;height:23px;background:#e1e1e1;"></div><svg class="a" style="left:252px;top:94px" width="16" height="16" viewBox="0 0 16 16">
<g fill="#777"><rect x="1" y="1" width="1" height="1"/><rect x="3" y="1" width="1" height="1"/><rect x="5" y="1" width="1" height="1"/><rect x="7" y="1" width="1" height="1"/><rect x="9" y="1" width="1" height="1"/><rect x="11" y="1" width="1" height="1"/><rect x="13" y="1" width="1" height="1"/>
<rect x="1" y="3" width="1" height="1"/><rect x="1" y="5" width="1" height="1"/><rect x="1" y="7" width="1" height="1"/><rect x="1" y="9" width="1" height="1"/><rect x="1" y="11" width="1" height="1"/>
<rect x="13" y="3" width="1" height="1"/><rect x="13" y="5" width="1" height="1"/><rect x="13" y="7" width="1" height="1"/><rect x="13" y="9" width="1" height="1"/><rect x="13" y="11" width="1" height="1"/>
<rect x="7" y="3" width="1" height="1"/><rect x="7" y="5" width="1" height="1"/><rect x="7" y="9" width="1" height="1"/><rect x="7" y="11" width="1" height="1"/>
<rect x="3" y="7" width="1" height="1"/><rect x="5" y="7" width="1" height="1"/><rect x="9" y="7" width="1" height="1"/><rect x="11" y="7" width="1" height="1"/></g>
<rect x="1" y="14" width="13" height="1.2" fill="#666"/>
</svg><svg class="a" style="left:274px;top:102px" width="6" height="4" viewBox="0 0 6 4"><polygon points="0,0.5 5,0.5 2.5,3.2" fill="#666666"/></svg><div class="a" style="left:287px;top:92px;width:1px;height:23px;background:#e1e1e1;"></div><svg class="a" style="left:294px;top:93px" width="20" height="20" viewBox="0 0 20 20">
<path d="M4,8 L9.5,2.5 L15,8 L9.5,13.5 Z" fill="#fff" stroke="#555" stroke-width="1.1"/>
<path d="M8,1.5 V6.5" stroke="#555" stroke-width="1.1"/>
<path d="M15,7 C17,7.5 17.5,10 16.5,12.5 C15.5,11 15,9 15,7 Z" fill="#2e75b6"/>
<rect x="1" y="14" width="16" height="4.2" fill="#ffff00"/>
</svg><svg class="a" style="left:316.5px;top:102px" width="6" height="4" viewBox="0 0 6 4"><polygon points="0,0.5 5,0.5 2.5,3.2" fill="#666666"/></svg><div class="a t" style="left:333.00px;top:94px;font-size:14px;line-height:16px;color:#555;font-weight:bold;transform:scaleX(0.9000);">A</div><div class="a" style="left:329px;top:107px;width:16px;height:4px;background:#ff0000;"></div><svg class="a" style="left:351.5px;top:102px" width="6" height="4" viewBox="0 0 6 4"><polygon points="0,0.5 5,0.5 2.5,3.2" fill="#666666"/></svg><div class="a" style="left:413px;top:61px;width:22px;height:23px;background:#9fd5b7;"></div><svg class="a" style="left:373px;top:64px" width="20" height="11" viewBox="0 0 20 11"><rect x="0" y="0" width="14" height="1.1" fill="#666"/><rect x="0" y="3" width="14" height="1.1" fill="#666"/><rect x="0" y="6" width="14" height="1.1" fill="#666"/></svg><svg class="a" style="left:395px;top:68px" width="20" height="11" viewBox="0 0 20 11"><rect x="0" y="0" width="14" height="1.1" fill="#666"/><rect x="0" y="3" width="14" height="1.1" fill="#666"/><rect x="0" y="6" width="14" height="1.1" fill="#666"/></svg><svg class="a" style="left:417px;top:73px" width="20" height="11" viewBox="0 0 20 11"><rect x="0" y="0" width="14" height="1.1" fill="#555"/><rect x="0" y="3" width="14" height="1.1" fill="#555"/><rect x="0" y="6" width="14" height="1.1" fill="#555"/></svg><div class="a" style="left:439px;top:61px;width:1px;height:23px;background:#e1e1e1;"></div><svg class="a" style="left:445px;top:62px" width="30" height="20" viewBox="0 0 30 20">
<text x="0" y="0" font-size="11" font-family="Liberation Sans" fill="#555" transform="translate(4.5,12.5) rotate(-45)">ab</text>
<path d="M7.5,18 L19,6.5" stroke="#555" stroke-width="1.1"/><path d="M15,6 H19.5 V10.5" fill="none" stroke="#555" stroke-width="1.1"/>
</svg><svg class="a" style="left:468px;top:70px" width="6" height="4" viewBox="0 0 6 4"><polygon points="0,0.5 5,0.5 2.5,3.2" fill="#666666"/></svg><div class="a" style="left:492px;top:60px;width:1px;height:56px;background:#e1e1e1;"></div><svg class="a" style="left:499px;top:63px" width="18" height="18" viewBox="0 0 18 18">
<rect x="1.5" y="1.5" width="9" height="3.5" fill="none" stroke="#666" stroke-width="1"/>
<path d="M5,3.25 H14.5" stroke="#2e75b6" stroke-width="1"/>
<rect x="1.5" y="7.5" width="9" height="8" fill="none" stroke="#666" stroke-width="1"/>
<path d="M3,9.5 H8 M3,11.5 H8 M3,13.5 H7" stroke="#2e75b6" stroke-width="1"/>
<path d="M14,6 C14.5,9 13,10.5 10.5,10.5" fill="none" stroke="#2e75b6" stroke-width="1.1"/>
<path d="M12.5,8.5 L10.3,10.5 L12.5,12.5" fill="none" stroke="#2e75b6" stroke-width="1.1"/>
</svg><div class="a t" style="left:519.00px;top:66px;font-size:12px;line-height:14px;color:#444444;transform:scaleX(0.9456);">Wrap Text</div><svg class="a" style="left:373px;top:98px" width="20" height="14" viewBox="0 0 20 14"><rect x="0" y="0" width="14" height="1.1" fill="#666"/><rect x="0" y="3" width="10" height="1.1" fill="#666"/><rect x="0" y="6" width="14" height="1.1" fill="#666"/><rect x="0" y="9" width="10" height="1.1" fill="#666"/></svg><svg class="a" style="left:395px;top:98px" width="20" height="14" viewBox="0 0 20 14"><rect x="0" y="0" width="14" height="1.1" fill="#666"/><rect x="2" y="3" width="10" height="1.1" fill="#666"/><rect x="0" y="6" width="14" height="1.1" fill="#666"/><rect x="2" y="9" width="10" height="1.1" fill="#666"/></svg><svg class="a" style="left:417px;top:98px" width="20" height="14" viewBox="0 0 20 14"><rect x="0" y="0" width="14" height="1.1" fill="#666"/><rect x="4" y="3" width="10" height="1.1" fill="#666"/><rect x="0" y="6" width="14" height="1.1" fill="#666"/><rect x="4" y="9" width="10" height="1.1" fill="#666"/></svg><div class="a" style="left:439px;top:92px;width:1px;height:23px;background:#e1e1e1;"></div><svg class="a" style="left:446px;top:96px" width="42" height="14" viewBox="0 0 42 14">
<g fill="#666"><rect x="7" y="1" width="10" height="1.1"/><rect x="7" y="4" width="10" height="1.1"/><rect x="7" y="7" width="10" height="1.1"/><rect x="1" y="10" width="16" height="1.1"/></g>
<path d="M1.5,5 H7" stroke="#2e75b6" stroke-width="1.4"/><polygon points="1,5 4.5,2 4.5,8" fill="#2e75b6"/>
<g fill="#666"><rect x="29" y="1" width="10" height="1.1"/><rect x="29" y="4" width="10" height="1.1"/><rect x="29" y="7" width="10" height="1.1"/><rect x="23" y="10" width="16" height="1.1"/></g>
<path d="M23,5 H28" stroke="#2e75b6" stroke-width="1.4"/><polygon points="29.5,5 26,2 26,8" fill="#2e75b6"/>
</svg><svg class="a" style="left:499px;top:94px" width="18" height="18" viewBox="0 0 18 18">
<rect x="1.5" y="1.5" width="14" height="14" fill="#fff" stroke="#666" stroke-width="1"/>
<path d="M1.5,5.5 H15.5 M1.5,11.5 H15.5 M8.5,1.5 V5.5 M8.5,11.5 V15.5" stroke="#666" stroke-width="1"/>
<path d="M3.5,8.5 H13.5" stroke="#2e75b6" stroke-width="1"/>
<polygon points="3,8.5 5.5,6.5 5.5,10.5" fill="#2e75b6"/><polygon points="14,8.5 11.5,6.5 11.5,10.5" fill="#2e75b6"/>
</svg><div class="a t" style="left:519.50px;top:97px;font-size:12px;line-height:14px;color:#444444;">Merge &amp; Center</div><svg class="a" style="left:613.5px;top:102px" width="6" height="4" viewBox="0 0 6 4"><polygon points="0,0.5 5,0.5 2.5,3.2" fill="#666666"/></svg><div class="a" style="left:633px;top:61px;width:131px;height:23px;background:#fff;border:1px solid #c6c6c6;box-sizing:border-box;"></div><div class="a t" style="left:636.50px;top:66px;font-size:12px;line-height:14px;color:#111;transform:scaleX(0.9399);">General</div><svg class="a" style="left:753.5px;top:70px" width="6" height="4" viewBox="0 0 6 4"><polygon points="0,0.5 5,0.5 2.5,3.2" fill="#666666"/></svg><div class="a t" style="left:640.00px;top:95.5px;font-size:14px;line-height:16px;color:#555;">$</div><svg class="a" style="left:658.5px;top:102px" width="6" height="4" viewBox="0 0 6 4"><polygon points="0,0.5 5,0.5 2.5,3.2" fill="#666666"/></svg><div class="a t" style="left:672.00px;top:95.5px;font-size:13px;line-height:15px;color:#555;transform:scaleX(1.0833);">%</div><div class="a t" style="left:696.00px;top:91px;font-size:14px;line-height:16px;color:#555;font-weight:bold;transform:scaleX(1.3333);">,</div><div class="a" style="left:715px;top:92px;width:1px;height:23px;background:#e1e1e1;"></div><svg class="a" style="left:722px;top:95px" width="40" height="16" viewBox="0 0 40 16">
<text x="6" y="7" font-size="8" font-family="Liberation Sans" fill="#555">.0</text>
<text x="4" y="13.5" font-size="8" font-family="Liberation Sans" fill="#555">.00</text>
<path d="M1.5,4.5 H6" stroke="#2e75b6" stroke-width="1.1"/><polygon points="0.5,4.5 3,2.3 3,6.7" fill="#2e75b6"/>
<text x="24" y="7" font-size="8" font-family="Liberation Sans" fill="#555">.00</text>
<text x="29" y="13.5" font-size="8" font-family="Liberation Sans" fill="#555">.0</text>
<path d="M21.5,10.5 H27" stroke="#2e75b6" stroke-width="1.1"/><polygon points="28,10.5 25.5,8.3 25.5,12.7" fill="#2e75b6"/>
</svg><svg class="a" style="left:793px;top:55px" width="36" height="36" viewBox="0 0 36 36">
<rect x="2.5" y="2.5" width="27" height="24" fill="#fff" stroke="#888" stroke-width="1"/>
<path d="M2.5,8.5 H29.5 M2.5,14.5 H29.5 M2.5,20.5 H29.5 M9.5,2.5 V26.5 M23.5,2.5 V26.5" stroke="#888" stroke-width="1"/>
<rect x="9.5" y="2.5" width="5.5" height="6" fill="#e15a33"/>
<rect x="9.5" y="8.5" width="11" height="6" fill="#2e75b6"/>
<rect x="9.5" y="14.5" width="8" height="6" fill="#e15a33"/>
<rect x="9.5" y="20.5" width="4" height="6" fill="#2e75b6"/>
<rect x="15.5" y="19.5" width="15" height="13" fill="#fff" stroke="#777" stroke-width="1"/>
<text x="17.5" y="31" font-size="14" font-family="Liberation Sans" fill="#444">&#8800;</text>
</svg><div class="a t" style="left:778.00px;top:92px;font-size:12px;line-height:14px;color:#444444;transform:scaleX(1.0274);">Conditional</div><div class="a t" style="left:775.00px;top:107.5px;font-size:12px;line-height:14px;color:#444444;transform:scaleX(1.0410);">Formatting</div><svg class="a" style="left:837.5px;top:113px" width="6" height="4" viewBox="0 0 6 4"><polygon points="0,0.5 5,0.5 2.5,3.2" fill="#666666"/></svg><svg class="a" style="left:858px;top:57px" width="34" height="34" viewBox="0 0 34 34">
<rect x="2.5" y="2.5" width="24" height="21" fill="#fff" stroke="#888" stroke-width="1"/>
<rect x="8.5" y="6.5" width="18" height="17" fill="#bdd7ee"/>
<path d="M2.5,6.5 H26.5 M2.5,11.5 H26.5 M2.5,16.5 H26.5 M8.5,2.5 V23.5 M14.5,2.5 V23.5 M20.5,2.5 V23.5" stroke="#999" stroke-width="1"/>
<path d="M20,22 L29,12 L31.5,14.5 L23,24 Z" fill="#777"/>
<path d="M19,23 C15,24 12,27 11,31 C16,31 21,29 23,25 Z" fill="#2e75b6"/>
</svg><div class="a t" style="left:847.00px;top:92px;font-size:12px;line-height:14px;color:#444444;transform:scaleX(0.9442);">Format as</div><div class="a t" style="left:855.00px;top:107.5px;font-size:12px;line-height:14px;color:#444444;transform:scaleX(0.9651);">Table</div><svg class="a" style="left:886.5px;top:113px" width="6" height="4" viewBox="0 0 6 4"><polygon points="0,0.5 5,0.5 2.5,3.2" fill="#666666"/></svg><div class="a" style="left:903px;top:56px;width:229px;height:60px;background:#fff;border:1px solid #c6c6c6;box-sizing:border-box;"></div><div class="a" style="left:904px;top:58px;width:107px;height:28px;background:#fff;border:2px solid #9fd5b7;box-sizing:border-box;"></div><div class="a t" style="left:911.60px;top:65px;font-size:12px;line-height:14px;color:#111;transform:scaleX(1.1709);">Normal</div><div class="a" style="left:1013px;top:61px;width:100px;height:22px;background:#ffc7ce;"></div><div class="a t" style="left:1017.00px;top:65px;font-size:12px;line-height:14px;color:#9c0006;transform:scaleX(1.0639);">Bad</div><div class="a" style="left:907px;top:89px;width:100px;height:22px;background:#c6efce;"></div><div class="a t" style="left:911.00px;top:93px;font-size:12px;line-height:14px;color:#006100;transform:scaleX(1.1506);">Good</div><div class="a" style="left:1013px;top:89px;width:100px;height:22px;background:#ffeb9c;"></div><div class="a t" style="left:1017.50px;top:93px;font-size:12px;line-height:14px;color:#9c5700;transform:scaleX(1.1968);">Neutral</div><div class="a" style="left:1118px;top:57px;width:13px;height:20px;background:#f7f7f7;"></div><div class="a" style="left:1117px;top:56px;width:1px;height:60px;background:#c6c6c6;"></div><div class="a" style="left:1117px;top:77px;width:15px;height:1px;background:#c6c6c6;"></div><div class="a" style="left:1117px;top:96px;width:15px;height:1px;background:#c6c6c6;"></div><svg class="a" style="left:1117px;top:57px" width="14" height="58" viewBox="0 0 14 58">
<polygon points="4,11 10,11 7,8" fill="#c8c8c8"/>
<polygon points="4,28.5 10,28.5 7,31.5" fill="#555"/>
<rect x="4" y="45.5" width="6" height="1" fill="#555"/>
<polygon points="4,48 10,48 7,51" fill="#555"/>
</svg><svg class="a" style="left:1150px;top:56px" width="36" height="32" viewBox="0 0 36 32">
<g fill="#fff" stroke="#777" stroke-width="1">
<rect x="2.5" y="2.5" width="7" height="5"/><rect x="9.5" y="2.5" width="7" height="5"/>
<rect x="2.5" y="18.5" width="7" height="5"/><rect x="9.5" y="18.5" width="7" height="5"/>
<rect x="2.5" y="23.5" width="7" height="5"/><rect x="9.5" y="23.5" width="7" height="5"/></g>
<g fill="#bdd7ee" stroke="#777" stroke-width="1"><rect x="13.5" y="10.5" width="7" height="5"/><rect x="20.5" y="10.5" width="7" height="5"/></g>
<path d="M3,12.5 H10" stroke="#2e75b6" stroke-width="1.6"/><polygon points="1.5,12.5 5,9.5 5,15.5" fill="#2e75b6"/>
</svg><div class="a t" style="left:1149.02px;top:92px;font-size:12px;line-height:14px;color:#444444;transform:scaleX(0.9772);">Insert</div><svg class="a" style="left:1162.5px;top:113px" width="6" height="4" viewBox="0 0 6 4"><polygon points="0,0.5 5,0.5 2.5,3.2" fill="#666666"/></svg><svg class="a" style="left:1191px;top:56px" width="36" height="32" viewBox="0 0 36 32">
<g fill="#fff" stroke="#777" stroke-width="1">
<rect x="2.5" y="2.5" width="7" height="5"/><rect x="9.5" y="2.5" width="7" height="5"/>
<rect x="2.5" y="18.5" width="7" height="5"/><rect x="9.5" y="18.5" width="7" height="5"/>
<rect x="2.5" y="23.5" width="7" height="5"/><rect x="9.5" y="23.5" width="7" height="5"/></g>
<g fill="#bdd7ee" stroke="#777" stroke-width="1"><rect x="8.5" y="10.5" width="7" height="5"/><rect x="15.5" y="10.5" width="5" height="5"/></g>
<path d="M17,7.5 L30,19.5 M30.5,7 L17,20" stroke="#e15a33" stroke-width="2.2"/>
</svg><div class="a t" style="left:1190.00px;top:92px;font-size:12px;line-height:14px;color:#444444;transform:scaleX(0.9425);">Delete</div><svg class="a" style="left:1204.5px;top:113px" width="6" height="4" viewBox="0 0 6 4"><polygon points="0,0.5 5,0.5 2.5,3.2" fill="#666666"/></svg><svg class="a" style="left:1233px;top:55px" width="34" height="36" viewBox="0 0 34 36">
<path d="M2.5,1.5 V7 M25.5,1.5 V7" stroke="#2e75b6" stroke-width="1"/>
<path d="M4.5,4.5 H23.5" stroke="#2e75b6" stroke-width="1"/>
<path d="M7,2.3 L4.5,4.5 L7,6.7 M21,2.3 L23.5,4.5 L21,6.7" fill="none" stroke="#2e75b6" stroke-width="1.2"/>
<rect x="2.5" y="8.5" width="27" height="20" fill="#fff" stroke="#777" stroke-width="1"/>
<path d="M2.5,13.5 H29.5 M2.5,23.5 H29.5 M10.5,8.5 V28.5 M17.5,8.5 V28.5 M24.5,8.5 V28.5" stroke="#aaa" stroke-width="1"/>
<rect x="10.5" y="14" width="7" height="9" fill="#3a7cc2"/>
<path d="M2.5,28.5 V32.5 H13 L16,29.5 V32.5 H26 L29.5,28.5" fill="#fff" stroke="#777" stroke-width="1"/>
</svg><div class="a t" style="left:1230.50px;top:92px;font-size:12px;line-height:14px;color:#444444;transform:scaleX(0.9697);">Format</div><svg class="a" style="left:1245.5px;top:113px" width="6" height="4" viewBox="0 0 6 4"><polygon points="0,0.5 5,0.5 2.5,3.2" fill="#666666"/></svg><svg class="a" style="left:1282px;top:55px" width="20" height="64" viewBox="0 0 20 64">
<path d="M15,3.5 V2 H2 L8.5,8.5 L2,15 H15.5 V13.5" fill="none" stroke="#444" stroke-width="1.8" stroke-linejoin="miter"/>
<rect x="2.5" y="24.5" width="13" height="15" fill="#fff" stroke="#555" stroke-width="1"/>
<rect x="2" y="24" width="14" height="3" fill="#777"/>
<path d="M9,28 V36" stroke="#2e75b6" stroke-width="1.6"/><polygon points="5.5,33 12.5,33 9,37.5" fill="#2e75b6"/>
<path d="M3,56 L10,48 L15,52 L8,60 Z" fill="#e8808a"/>
<path d="M2.5,57 L7.5,61 H15.5" fill="none" stroke="#777" stroke-width="1"/>
</svg><div class="a t" style="left:1302.00px;top:58px;font-size:12px;line-height:14px;color:#444444;transform:scaleX(0.9926);">AutoSum</div><svg class="a" style="left:1362.5px;top:64px" width="6" height="4" viewBox="0 0 6 4"><polygon points="0,0.5 5,0.5 2.5,3.2" fill="#666666"/></svg><div class="a t" style="left:1302.00px;top:81px;font-size:12px;line-height:14px;color:#444444;transform:scaleX(1.0230);">Fill</div><svg class="a" style="left:1321px;top:86px" width="6" height="4" viewBox="0 0 6 4"><polygon points="0,0.5 5,0.5 2.5,3.2" fill="#666666"/></svg><div class="a t" style="left:1302.00px;top:104px;font-size:12px;line-height:14px;color:#444444;transform:scaleX(0.9414);">Clear</div><svg class="a" style="left:1331px;top:109px" width="6" height="4" viewBox="0 0 6 4"><polygon points="0,0.5 5,0.5 2.5,3.2" fill="#666666"/></svg><svg class="a" style="left:1376px;top:56px" width="34" height="32" viewBox="0 0 34 32">
<text x="1.9" y="14.9" font-size="16.5" font-family="Liberation Sans" fill="#2e75b6" stroke="#2e75b6" stroke-width="0.6">A</text>
<text x="2.6" y="28.7" font-size="16.5" font-family="Liberation Sans" fill="#8e4bbf" stroke="#8e4bbf" stroke-width="0.5">Z</text>
<path d="M3,21 L7,16.5 L11,21" fill="none" stroke="#555" stroke-width="0"/>
<path d="M14,10 H31 V12 L24.5,19 V24.5 H21 V19 L14,12 Z" fill="#6d6d6d"/><path d="M16,11.5 L22.2,18 V23.5" fill="none" stroke="#fff" stroke-width="0.9"/>
<path d="M16,13.5 H28 L23.2,18.5 H21 Z" fill="#fff" opacity="0.0"/>
</svg><div class="a t" style="left:1376.00px;top:92px;font-size:12px;line-height:14px;color:#444444;transform:scaleX(1.0197);">Sort &amp;</div><div class="a t" style="left:1376.50px;top:107.5px;font-size:12px;line-height:14px;color:#444444;transform:scaleX(0.9936);">Filter</div><svg class="a" style="left:1405.5px;top:113px" width="6" height="4" viewBox="0 0 6 4"><polygon points="0,0.5 5,0.5 2.5,3.2" fill="#666666"/></svg><svg class="a" style="left:1418px;top:56px" width="36" height="32" viewBox="0 0 36 32">
<g fill="#6d6d6d">
<rect x="11" y="4" width="4" height="3.2"/><rect x="9" y="7" width="8" height="5.4"/><rect x="7" y="12.3" width="10" height="3.7"/><rect x="5" y="15.9" width="11" height="11"/>
<rect x="21.2" y="4" width="3.8" height="3.2"/><rect x="19.2" y="7" width="7.8" height="5.4"/><rect x="19.2" y="12.3" width="9.8" height="3.7"/><rect x="20.2" y="15.9" width="10.8" height="11"/>
<rect x="16.5" y="12.3" width="3" height="3.7"/></g>
<g fill="#fff"><rect x="6" y="17" width="1" height="8.5"/><rect x="8" y="13" width="1" height="2.5"/><rect x="10" y="8" width="1" height="3.5"/><rect x="12.3" y="5" width="1" height="1.5"/>
<rect x="29" y="17" width="1" height="8.5"/><rect x="27" y="13" width="1" height="2.5"/><rect x="25" y="8" width="1" height="3.5"/><rect x="22.7" y="5" width="1" height="1.5"/>
<rect x="17" y="13.8" width="2" height="1"/></g>
</svg><div class="a t" style="left:1418.50px;top:92px;font-size:12px;line-height:14px;color:#444444;transform:scaleX(0.9949);">Find &amp;</div><div class="a t" style="left:1416.00px;top:107.5px;font-size:12px;line-height:14px;color:#444444;transform:scaleX(1.0289);">Select</div><svg class="a" style="left:1450.5px;top:113px" width="6" height="4" viewBox="0 0 6 4"><polygon points="0,0.5 5,0.5 2.5,3.2" fill="#666666"/></svg>
</body></html>
